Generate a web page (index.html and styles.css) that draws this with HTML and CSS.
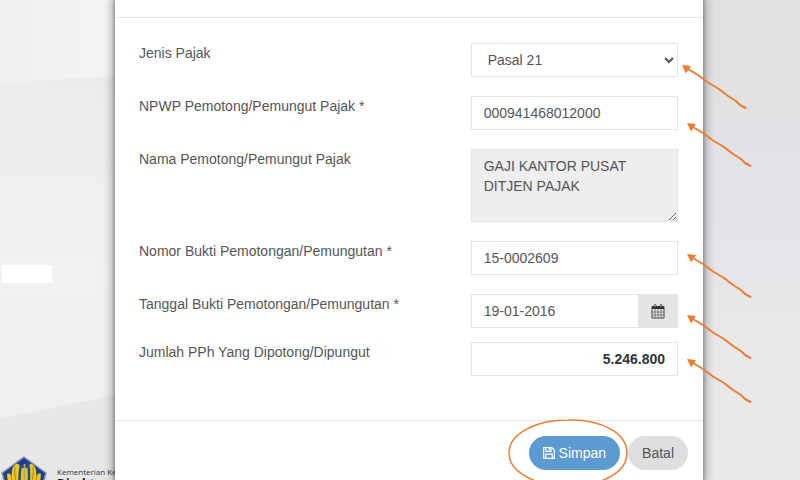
FILE: index.html
```html
<!DOCTYPE html>
<html lang="id">
<head>
    <meta charset="UTF-8">
    <meta name="viewport" content="width=device-width, initial-scale=1.0">
    <title>Bukti Pemotongan Pajak</title>
    <link rel="stylesheet" href="styles.css">
</head>
<body>
    <svg class="backdrop" viewBox="0 0 800 480" preserveAspectRatio="none" aria-hidden="true">
        <defs>
            <linearGradient id="bgTop" x1="0" x2="1">
                <stop offset="0" stop-color="#efefef"/>
                <stop offset="0.12" stop-color="#f4f4f4"/>
                <stop offset="0.85" stop-color="#e2e2e2"/>
                <stop offset="1" stop-color="#dedede"/>
            </linearGradient>
            <linearGradient id="bgMid" x1="0" y1="0" x2="0" y2="1">
                <stop offset="0" stop-color="#ebebed"/>
                <stop offset="0.5" stop-color="#f1f1f2"/>
                <stop offset="1" stop-color="#eeeeee"/>
            </linearGradient>
            <linearGradient id="bgRight" x1="0" y1="0" x2="0" y2="1">
                <stop offset="0" stop-color="#e0e0e0"/>
                <stop offset="0.4" stop-color="#e3e2e7"/>
                <stop offset="0.7" stop-color="#e8e8ea"/>
                <stop offset="1" stop-color="#e9e8ea"/>
            </linearGradient>
        </defs>
        <rect width="800" height="480" fill="url(#bgTop)"/>
        <path d="M0 83L115 76L400 60V480H0z" fill="url(#bgMid)"/>
        <path d="M0 419L115 395L400 330V480H0z" fill="#e8e7e8"/>
        <rect x="400" width="400" height="480" fill="url(#bgRight)"/>
    </svg>

    <div class="page">
        <div class="side">
            <div class="side-blank"></div>
            <div class="brand">
                <svg class="brand-logo" width="48" height="48" viewBox="0 0 48 48" aria-hidden="true">
                    <path d="M24 1L46 17L38 46H10L2 17z" fill="#1d3f8c" stroke="#8d97b4" stroke-width="1.5"/>
                    <path d="M24 43C12 42 8 32 7 18C9 17 11 18 12 20C11 14 13 10 16 8C18 7 20 9 21 12H27C28 9 30 7 32 8C35 10 37 14 36 20C37 18 39 17 41 18C40 32 36 42 24 43z" fill="#efc51f"/>
                    <path d="M21 9C19 18 19 30 23 40M28 7C30 18 29 30 25 40" fill="none" stroke="#24508a" stroke-width="2.5"/>
                    <path d="M24.500 8V40" stroke="#aaa987" stroke-width="2"/>
                    <path d="M15 11C14 22 17 32 22 39M33 11C34 22 31 32 26 39M11 19C12 29 15 35 21 40M37 19C36 29 33 35 27 40" fill="none" stroke="#a08d1c" stroke-width="1"/>
                </svg>
                <div class="brand-text">
                    <div class="brand-ministry">Kementerian Keuangan</div>
                    <div class="brand-office">Direktorat</div>
                </div>
            </div>
        </div>

        <div class="modal">
            <div class="modal-header"></div>
            <form class="modal-body">
                <div class="form-row">
                    <label for="jenisPajak">Jenis Pajak</label>
                    <select id="jenisPajak" class="form-control">
                        <option selected>Pasal 21</option>
                    </select>
                </div>
                <div class="form-row">
                    <label for="npwp">NPWP Pemotong/Pemungut Pajak *</label>
                    <input type="text" id="npwp" class="form-control" value="000941468012000">
                </div>
                <div class="form-row">
                    <label for="nama">Nama Pemotong/Pemungut Pajak</label>
                    <textarea id="nama" class="form-control" readonly>GAJI KANTOR PUSAT DITJEN PAJAK</textarea>
                </div>
                <div class="form-row">
                    <label for="nomor">Nomor Bukti Pemotongan/Pemungutan *</label>
                    <input type="text" id="nomor" class="form-control" value="15-0002609">
                </div>
                <div class="form-row form-row-date">
                    <label for="tanggal">Tanggal Bukti Pemotongan/Pemungutan *</label>
                    <div class="input-group">
                        <input type="text" id="tanggal" class="form-control" value="19-01-2016">
                        <button type="button" class="btn-date" aria-label="Pilih tanggal">
                            <svg width="14" height="15" viewBox="0 0 14 15" aria-hidden="true">
                                <path d="M1 2.500h12v11.500H1z" fill="#e9e9e9" stroke="#444" stroke-width="1"/>
                                <path d="M1 2h12v3H1z" fill="#333"/>
                                <path d="M4 5v9M7 5v9M10 5v9M1 8h12M1 11h12" stroke="#777" stroke-width="1"/>
                                <path d="M4 0.5v3M10 0.5v3" stroke="#333" stroke-width="2.4"/>
                                <path d="M4 1v2M10 1v2" stroke="#ddd" stroke-width="0.8"/>
                            </svg>
                        </button>
                    </div>
                </div>
                <div class="form-row">
                    <label for="jumlah">Jumlah PPh Yang Dipotong/Dipungut</label>
                    <input type="text" id="jumlah" class="form-control amount" value="5.246.800">
                </div>
            </form>
            <div class="modal-footer">
                <button type="button" class="btn btn-primary">
                    <svg width="12" height="12" viewBox="0 0 12 12" fill="none" stroke="#fff" stroke-width="1.2" aria-hidden="true">
                        <path d="M0.7 0.7h8.2l2.4 2.4v8.2H0.7z"/>
                        <path d="M3 1v3.4h5V1M2.8 11V7.2h6.4V11"/>
                        <path d="M6.6 1v2.4" stroke-width="1.6"/>
                    </svg>
                    Simpan
                    <svg class="mark" width="122" height="70" viewBox="0 0 122 70" aria-hidden="true">
                        <path d="M61 2C94 1 120 15 120 35C120 55 94 68 61 68C28 68 2 54 2 35C2 16 28 2 61 2z"/>
                    </svg>
                </button>
                <button type="button" class="btn btn-default">Batal</button>
            </div>

            <!-- penunjuk ke setiap isian -->
            <svg class="arrows" width="80" height="420" viewBox="0 0 80 420" aria-hidden="true">
                <defs>
                    <g id="arrow">
                        <path d="M5 3.500L16 10L26 17.500L37 24L46 31L54 36L58 40L63.500 43" class="arrow-line"/>
                        <path d="M0 0L9 1L4 8.500z" class="arrow-head"/>
                    </g>
                </defs>
                <use href="#arrow" x="2" y="65"/>
                <use href="#arrow" x="7" y="123"/>
                <use href="#arrow" x="7" y="254"/>
                <use href="#arrow" x="7" y="315"/>
                <use href="#arrow" x="7" y="359"/>
            </svg>
        </div>
    </div>
</body>
</html>
```
FILE: styles.css
```css
* {
    box-sizing: border-box;
}

body {
    margin: 0;
    height: 100vh;
    overflow: hidden;
    font-family: "Liberation Sans", Arial, sans-serif;
    font-size: 14px;
    line-height: 20px;
    color: #555;
    background-color: #ececec;
}

.backdrop {
    position: absolute;
    top: 0;
    left: 0;
    width: 100%;
    height: 100%;
}

.page {
    position: relative;
    display: grid;
    grid-template-columns: 115px minmax(0, 1fr) 97px;
    height: 100vh;
}

/* slide behind the dialog */
.side {
    display: flex;
    flex-direction: column;
    height: 100vh;
    overflow: hidden;
}

.side-blank {
    flex-shrink: 0;
    width: 50px;
    height: 18px;
    margin: 265px 0 173px 2px;
    background-color: #fff;
}

.brand {
    display: flex;
    flex-shrink: 0;
    gap: 9px;
}

.brand-logo {
    flex-shrink: 0;
}

.brand-text {
    padding-top: 10px;
    font-family: "Open Sans", "Noto Sans", sans-serif;
    white-space: nowrap;
    color: #333;
}

.brand-ministry {
    font-size: 8px;
    line-height: 11px;
}

.brand-office {
    font-size: 12px;
    line-height: 14px;
    font-weight: bold;
    color: #111;
}

/* dialog */
.modal {
    position: relative;
    min-height: 100vh;
    background-color: #fff;
    box-shadow: 0 0 2px 2px rgba(0, 0, 0, 0.15), 0 0 9px 3px rgba(0, 0, 0, 0.3);
}

.modal-header {
    height: 18px;
    border-bottom: 1px solid #e8e8e8;
}

.modal-body {
    display: flex;
    flex-direction: column;
    gap: 19px;
    padding: 25px 25px 44px 24px;
}

.form-row {
    display: grid;
    grid-template-columns: minmax(0, 8fr) minmax(0, 5fr);
    align-items: start;
}

.form-row-date {
    margin-bottom: -5px;
}

.form-control {
    width: 100%;
    height: 34px;
    margin: 0;
    padding: 6px 12px;
    border: 1px solid #e3e3e3;
    border-radius: 0;
    background-color: #fff;
    font-family: inherit;
    font-size: 14px;
    line-height: 20px;
    color: #555;
}

textarea.form-control {
    display: block;
    height: 73px;
    background-color: #eee;
}

.amount {
    font-weight: bold;
    text-align: right;
    color: #333;
}

.input-group {
    display: flex;
}

.input-group .form-control {
    flex: 1;
    min-width: 0;
    border-right: none;
}

.btn-date {
    display: flex;
    align-items: center;
    justify-content: center;
    width: 40px;
    height: 34px;
    padding: 0;
    border: none;
    background-color: #e4e4e4;
}

.modal-footer {
    display: flex;
    justify-content: flex-end;
    gap: 8px;
    padding: 15px;
    border-top: 1px solid #e8e8e8;
}

.btn {
    position: relative;
    display: flex;
    align-items: center;
    gap: 4px;
    height: 34px;
    padding: 0 14px;
    border: none;
    border-radius: 17px;
    font-family: inherit;
    font-size: 14px;
}

.btn-primary {
    background-color: #5b9bd1;
    color: #fff;
}

.btn-default {
    background-color: #dedede;
    color: #555;
}

.mark {
    position: absolute;
    top: -18px;
    left: -22px;
    fill: none;
    stroke: #ed7d31;
    stroke-width: 1.5;
}

.arrows {
    position: absolute;
    top: 0;
    right: -57px;
}

.arrow-line {
    fill: none;
    stroke: #ed7d31;
    stroke-width: 2;
    stroke-linecap: round;
    stroke-linejoin: round;
}

.arrow-head {
    fill: #ed7d31;
}
```
